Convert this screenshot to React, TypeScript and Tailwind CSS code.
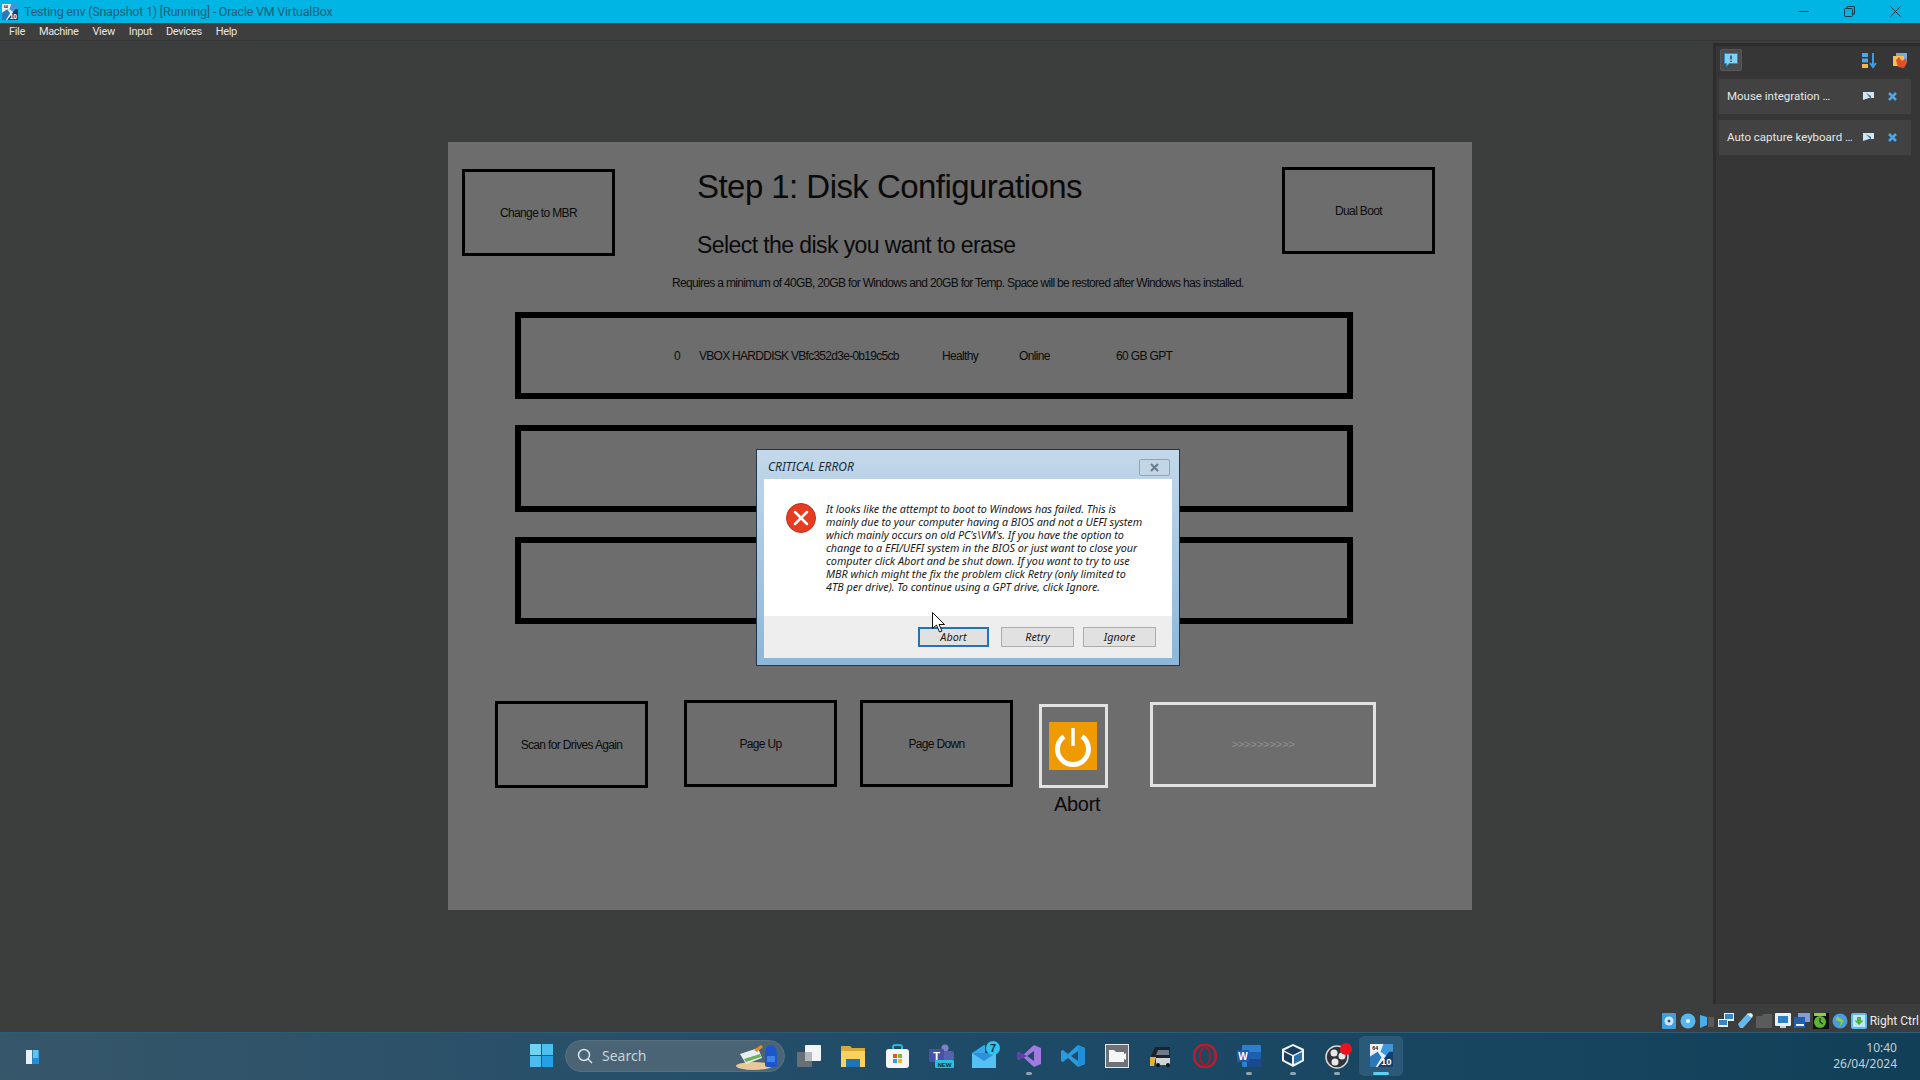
import type React from "react"

const sans = "font-['Noto_Sans',sans-serif]"
const ui = "font-['Roboto',sans-serif]"

const VmTile = ({ size }: { size: number }) => (
  <svg width={size} height={size} viewBox="0 0 24 24">
    <rect width="24" height="24" fill="#e6eef5" />
    <path d="M14 0H24V9L18 13L11 8Z" fill="#3f96d8" />
    <path d="M0 24V13L8 8L12 14L6 24Z" fill="#2a78b8" />
    <path d="M8 24L20 8L24 8V24Z" fill="#123f6e" />
    <rect x="1" y="1" width="9" height="6" fill="#f6f6f6" />
    <text x="5.500" y="6.200" fontSize="5.500" fontWeight="700" textAnchor="middle" fill="#111" fontFamily="Liberation Sans">64</text>
    <text x="17" y="22" fontSize="10" fontWeight="700" textAnchor="middle" fill="#fff" fontFamily="Liberation Sans">10</text>
  </svg>
)

const BlackBox = ({ label, className }: { label: string; className: string }) => (
  <div className={`flex w-[153px] h-[87px] shrink-0 items-center justify-center border-[3px] border-black text-[12px] tracking-[-0.65px] text-[#0c0c0c] ${className}`}>
    {label}
  </div>
)

const DiskRow = ({ children }: { children?: React.ReactNode }) => (
  <div className="relative flex h-[87px] w-[838px] items-center border-[6px] border-black text-[12px] tracking-[-0.65px] text-[#0c0c0c]">
    {children}
  </div>
)

const StatusIcon = ({ children }: { children: React.ReactNode }) => (
  <svg width="16" height="16" viewBox="0 0 16 16" className="shrink-0">{children}</svg>
)

const Cell = ({ children, dot, active }: { children: React.ReactNode; dot?: boolean; active?: boolean }) => (
  <div className={`relative flex h-[40px] w-[44px] shrink-0 items-center justify-center rounded-[5px] ${active ? "bg-[#2b5a78]" : ""}`}>
    {children}
    {dot && <div className="absolute bottom-[1px] h-[3px] w-[6px] rounded-full bg-[#8ea6b4]" />}
    {active && <div className="absolute bottom-[1px] h-[3px] w-[16px] rounded-full bg-[#5fd0ee]" />}
  </div>
)

const lines = [
  "It looks like the attempt to boot to Windows has failed. This is",
  "mainly due to your computer having a BIOS and not a UEFI system",
  "which mainly occurs on old PC's\\VM's. If you have the option to",
  "change to a EFI/UEFI system in the BIOS or just want to close your",
  "computer click Abort and be shut down. If you want to try to use",
  "MBR which might the fix the problem click Retry (only limited to",
  "4TB per drive). To continue using a GPT drive, click Ignore.",
]

export default function App() {
  return (
    <div className={`flex h-[1080px] w-[1920px] flex-col overflow-hidden bg-[#3c3e3d] ${sans}`}>
      {/* Title bar */}
      <div className="flex h-[23px] shrink-0 items-center bg-[#00b4e3] pl-[2px]">
        <VmTile size={16} />
        <span className={`ml-[6px] pt-[1px] text-[12.5px] tracking-[-0.22px] text-[#1f5f78] ${ui}`}>Testing env (Snapshot 1) [Running] - Oracle VM VirtualBox</span>
        <div className="ml-auto flex items-center gap-[35px] pr-[19px] text-[#123c4c]">
          <svg width="11" height="11" viewBox="0 0 11 11"><path d="M0 5.500H11" stroke="currentColor" /></svg>
          <svg width="11" height="11" viewBox="0 0 11 11" fill="none" stroke="currentColor"><rect x="0.500" y="2.500" width="8" height="8" rx="1" /><path d="M3 2.500V.5H10.500V8H8.500" /></svg>
          <svg width="11" height="11" viewBox="0 0 11 11"><path d="M.5.5L10.500 10.500M10.500.5L.5 10.500" stroke="currentColor" /></svg>
        </div>
      </div>

      {/* Menu bar */}
      <div className={`flex h-[18px] shrink-0 items-center gap-[14px] border-b border-[#353635] bg-[#3d3e3d] pl-[9px] pt-[1px] text-[11px] tracking-[-0.35px] text-[#e4e4e4] ${ui}`}>
        <span>File</span>
        <span>Machine</span>
        <span>View</span>
        <span>Input</span>
        <span>Devices</span>
        <span>Help</span>
      </div>

      {/* VM display + notification center */}
      <div className="flex min-h-0 flex-1">
        <div className="flex-1 pl-[448px] pt-[101px]">
          <div className="relative flex h-[768px] w-[1024px] flex-col bg-[#6d6d6d] font-['Liberation_Sans',sans-serif]">
            <div className="flex h-[125px] items-start">
              <BlackBox label="Change to MBR" className="ml-[14px] mt-[27px]" />
              <div className="ml-[82px] w-[585px]">
                <h1 className="mt-[27px] text-[33px] leading-[36px] tracking-[-0.55px] text-[#0a0a0a]">Step 1: Disk Configurations</h1>
                <h2 className="mt-[27px] text-[23px] leading-[26px] tracking-[-0.58px] text-[#0a0a0a]">Select the disk you want to erase</h2>
              </div>
              <BlackBox label="Dual Boot" className="mt-[25px]" />
            </div>

            <p className="ml-[224px] mt-[8px] h-[16px] text-[12px] leading-[16px] tracking-[-0.67px] text-[#0c0c0c]">
              Requires a minimum of 40GB, 20GB for Windows and 20GB for Temp. Space will be restored after Windows has installed.
            </p>

            <div className="ml-[67px] mt-[21px] flex flex-col gap-[25.5px]">
              <DiskRow>
                <span className="ml-[153px] w-[25px]">0</span>
                <span className="w-[243px] tracking-[-0.72px]">VBOX HARDDISK VBfc352d3e-0b19c5cb</span>
                <span className="w-[77px]">Healthy</span>
                <span className="w-[97px]">Online</span>
                <span>60 GB GPT</span>
              </DiskRow>
              <DiskRow />
              <DiskRow />
            </div>

            {/* Bottom buttons */}
            <div className="ml-[47px] mt-[76px] flex items-start">
              <BlackBox label="Scan for Drives Again" className="mt-[1px]" />
              <BlackBox label="Page Up" className="ml-[36px]" />
              <BlackBox label="Page Down" className="ml-[23px]" />
              <div className="relative ml-[26px] mt-[4px] flex h-[84px] w-[69px] shrink-0 items-center border-[3px] border-[#e2e2e2] pl-[7px]">
                <svg width="48" height="48" viewBox="0 0 48 48">
                  <rect width="48" height="48" fill="#ef9b00" />
                  <path d="M15 14.500 A15.500 15.500 0 1 0 33 14.500" fill="none" stroke="#fff" strokeWidth="5" />
                  <path d="M24 6V24" stroke="#fff" strokeWidth="3.500" />
                </svg>
                <span className="absolute left-[12px] top-[85px] text-[20px] leading-[24px] tracking-[-0.3px] text-[#0a0a0a]">Abort</span>
              </div>
              <div className="ml-[42px] mt-[2px] flex h-[85px] w-[226px] shrink-0 items-center justify-center border-[3px] border-[#e2e2e2] text-[11.5px] tracking-[-0.4px] text-[#8f8f8f]">
                {">>>>>>>>>>"}
              </div>
            </div>

            {/* Critical error dialog */}
            <div className={`absolute left-[308px] top-[307px] flex h-[217px] w-[424px] flex-col border border-[#20364a] bg-gradient-to-b from-[#c3d8ea] to-[#8db6d8] px-[7px] pb-[7px] ${sans}`}>
              <div className="flex h-[29px] shrink-0 items-start">
                <span className="ml-[4px] mt-[9px] text-[12px] leading-[16px] italic text-[#1c2a36]">CRITICAL ERROR</span>
                <div className="ml-auto mr-[2px] mt-[9px] flex h-[17px] w-[31px] items-center justify-center rounded-[2px] border border-[#8aa6bd] bg-[#c3d6e6]">
                  <svg width="11" height="9" viewBox="0 0 11 9"><path d="M2 1L9 8M9 1L2 8" stroke="#6a7a88" strokeWidth="2" /></svg>
                </div>
              </div>
              <div className="flex min-h-0 flex-1 flex-col">
                <div className="flex h-[137px] shrink-0 bg-white pl-[22px] pt-[24px]">
                  <svg width="30" height="30" viewBox="0 0 30 30" className="shrink-0">
                    <circle cx="15" cy="15" r="14.500" fill="#e63c20" stroke="#b9341e" />
                    <path d="M9 9L21 21M21 9L9 21" stroke="#fff" strokeWidth="2.500" strokeLinecap="round" />
                  </svg>
                  <div className="ml-[10px] -mt-[1px] whitespace-nowrap text-[10.8px] leading-[13px] tracking-[-0.04px] italic text-[#1a1a1a]">
                    {lines.map((l) => <div key={l}>{l}</div>)}
                  </div>
                </div>
                <div className="flex flex-1 items-start justify-end bg-[#eeeeee] pr-[16px] pt-[11px] text-[10.8px] italic text-[#222]">
                  <div className="flex h-[20px] w-[71px] items-center justify-center border-2 border-[#1f75b8] bg-[#e1e1e1]">Abort</div>
                  <div className="ml-[12px] flex h-[20px] w-[73px] items-center justify-center border border-[#adadad] bg-[#e1e1e1]">Retry</div>
                  <div className="ml-[9px] flex h-[20px] w-[73px] items-center justify-center border border-[#adadad] bg-[#e1e1e1]">Ignore</div>
                </div>
              </div>
            </div>

            {/* Mouse pointer */}
            <svg width="13" height="21" viewBox="0 0 13 21" className="absolute left-[484px] top-[470px]">
              <path d="M.5.5V16.500L4.500 13L7.500 20L10 19L7 12.500H12.500Z" fill="#fff" stroke="#111" />
            </svg>
          </div>
        </div>

        {/* Notification center */}
        <div className={`mb-[1px] mt-[2px] flex w-[207px] shrink-0 flex-col border-l-[3px] border-t-[3px] border-[#2c2d2c] bg-[#353635] pl-[3px] pr-[9px] text-[11.5px] text-[#e6e6e6] ${ui}`}>
          <div className="flex h-[28px] shrink-0 items-center pl-[1px] pr-[3px]">
            <div className="flex h-[22px] w-[22px] items-center justify-center rounded-[2px] border border-[#55585a] bg-[#4a4b4c]">
              <svg width="16" height="16" viewBox="0 0 16 16">
                <path d="M1.500 1.500H14.500V11.500H6L3.500 14.500V11.500H1.500Z" fill="#7fd1f5" stroke="#2f89c4" />
                <path d="M8 3.500V7.500M8 8.800V10" stroke="#123" strokeWidth="1.200" />
              </svg>
            </div>
            <svg width="17" height="17" viewBox="0 0 17 17" className="ml-auto">
              <rect x="1" y="1" width="6" height="4" fill="#4aa8e8" />
              <rect x="1" y="6.500" width="6" height="4" fill="#4aa8e8" />
              <rect x="1" y="12" width="6" height="4" fill="#f2b84b" />
              <path d="M12 1V14M9 11L12 15L15 11" fill="none" stroke="#3d9be0" strokeWidth="2" />
            </svg>
            <svg width="17" height="17" viewBox="0 0 17 17" className="ml-[13px]">
              <rect x="5" y="1" width="11" height="9" fill="#7fa9d8" />
              <rect x="2" y="4" width="11" height="10" fill="#f2c14e" />
              <path d="M5 8L8 5L11 9L15 6L16 11L13 16L7 15Z" fill="#e2502a" />
            </svg>
          </div>
          <div className="mt-[5px] flex h-[35px] shrink-0 items-center bg-[#414241] pl-[8px] pr-[14px]">
            <span className="flex-1">Mouse integration …</span>
            <svg width="11" height="9" viewBox="0 0 11 9" className="mr-[14px]"><path d="M0 0H11V6H6L0 8Z" fill="#cfe6f5" /><path d="M3 1L8 4V7Z" fill="#3e6f92" /></svg>
            <svg width="9" height="9" viewBox="0 0 9 9"><path d="M1 1L8 8M8 1L1 8" stroke="#4aa8e8" strokeWidth="2.500" /></svg>
          </div>
          <div className="mt-[6px] flex h-[35px] shrink-0 items-center bg-[#414241] pl-[8px] pr-[14px]">
            <span className="flex-1">Auto capture keyboard …</span>
            <svg width="11" height="9" viewBox="0 0 11 9" className="mr-[14px]"><path d="M0 0H11V6H6L0 8Z" fill="#cfe6f5" /><path d="M3 1L8 4V7Z" fill="#3e6f92" /></svg>
            <svg width="9" height="9" viewBox="0 0 9 9"><path d="M1 1L8 8M8 1L1 8" stroke="#4aa8e8" strokeWidth="2.500" /></svg>
          </div>
        </div>
      </div>

      {/* VirtualBox status bar */}
      <div className={`flex h-[27px] shrink-0 items-center justify-end gap-[3px] bg-[#3c3e3d] pt-[5px] text-[12px] text-[#eaeaea] ${ui}`}>
        <StatusIcon><rect x="1" y="0" width="14" height="16" rx="1" fill="#3f9fe0" /><circle cx="8" cy="8" r="4.500" fill="#cfe8f8" /><circle cx="8" cy="8" r="1.500" fill="#26608c" /></StatusIcon>
        <StatusIcon><circle cx="8" cy="8" r="7.500" fill="#55b7ee" /><circle cx="8" cy="8" r="2" fill="#e6f5ff" /></StatusIcon>
        <StatusIcon><path d="M1 2L8 4V12L1 15Z" fill="#4aaeea" /><rect x="9" y="4" width="6" height="10" fill="#5a5b5a" /></StatusIcon>
        <StatusIcon><rect x="6" y="0" width="10" height="8" fill="#eaf2f8" /><rect x="7" y="1" width="8" height="5" fill="#3583c8" /><rect x="0" y="6" width="10" height="8" fill="#eaf2f8" /><rect x="1" y="7" width="8" height="5" fill="#3583c8" /></StatusIcon>
        <StatusIcon><path d="M1 11L9 2L11 0L15 3L14 6L6 15H3Z" fill="#62b8ef" /><path d="M10 1L15 5L16 2L14 0Z" fill="#e6f2fa" /></StatusIcon>
        <StatusIcon><path d="M0 3H6L7 1H16V15H0Z" fill="#5a5b5a" /></StatusIcon>
        <StatusIcon><rect x="0" y="0" width="16" height="13" rx="1" fill="#e8f0f6" /><rect x="3" y="3" width="10" height="7" fill="#2f7fc7" /><rect x="5" y="13" width="6" height="2" fill="#c8d4dc" /></StatusIcon>
        <StatusIcon><rect x="4" y="0" width="12" height="9" fill="#7f9fd6" /><rect x="0" y="4" width="11" height="11" fill="#1f5fae" /><rect x="2" y="11" width="8" height="2" fill="#e8f0f6" /></StatusIcon>
        <StatusIcon><rect x="0" y="0" width="16" height="16" fill="#111" /><circle cx="7" cy="9" r="6" fill="#5fb32e" /><path d="M7 5V9L10 11" fill="none" stroke="#123" strokeWidth="1.200" /><rect x="1" y="0" width="12" height="3" fill="#8fce3f" /></StatusIcon>
        <StatusIcon><circle cx="8" cy="8" r="7.500" fill="#4a9be0" /><path d="M5 3L12 8L7 14L9 9L4 7Z" fill="#8cd13f" /></StatusIcon>
        <StatusIcon><rect x="0" y="0" width="16" height="16" rx="2" fill="#5cbcf0" /><rect x="2" y="2" width="12" height="12" fill="#bfe6fb" /><path d="M8 12L3.500 7.500H6V4H10V7.500H12.500Z" fill="#4bb543" /></StatusIcon>
        <span className="whitespace-nowrap pr-[1px]">Right Ctrl</span>
      </div>

      {/* Windows taskbar */}
      <div className="relative flex h-[48px] shrink-0 items-center border-t border-[#2f5c74] bg-gradient-to-r from-[#36566a] via-[#1e4b68] to-[#123f58] pb-[2px] pl-[519px]">
        <svg width="16" height="16" viewBox="0 0 24 24" className="absolute left-[24px] top-[15px]">
          <rect x="3" y="3" width="9" height="21" fill="#e8eef2" />
          <rect x="13" y="3" width="9" height="21" fill="#58c6fa" />
          <rect x="13" y="15" width="9" height="9" fill="#1c8fe4" />
        </svg>

        <Cell>
          <svg width="23" height="23" viewBox="0 0 23 23">
            <rect width="11" height="11" fill="#6fd3f2" />
            <rect x="12" width="11" height="11" fill="#4cc0ee" />
            <rect y="12" width="11" height="11" fill="#4cbcec" />
            <rect x="12" y="12" width="11" height="11" fill="#24a0e4" />
          </svg>
        </Cell>

        <div className="ml-[2px] flex h-[32px] w-[220px] shrink-0 items-center rounded-full border border-[#587080] bg-[#4a6476] pl-[11px] pr-[4px]">
          <svg width="16" height="16" viewBox="0 0 16 16" fill="none" stroke="#d8e2e8" strokeWidth="1.500">
            <circle cx="7" cy="7" r="5.500" /><path d="M11 11L15 15" />
          </svg>
          <span className="ml-[9px] text-[14px] text-[#c6d3da]">Search</span>
          <svg width="46" height="28" viewBox="0 0 46 28" className="ml-auto">
            <ellipse cx="20" cy="24" rx="18" ry="4" fill="#e8c896" />
            <path d="M6 12L24 6L28 16L12 22Z" fill="#e8eef0" />
            <path d="M20 8L27 3L29 5L23 10Z" fill="#e0902e" />
            <path d="M10 17L26 12L27 15L12 20Z" fill="#6fae5a" />
            <path d="M31 12C31 6 34 3 37 3C40 3 43 6 43 12V23C43 25 41 25 37 25C33 25 31 25 31 23Z" fill="#1d56c8" />
            <rect x="33" y="14" width="8" height="6" fill="#3f82e6" />
          </svg>
        </div>

        <div className="ml-[2px] flex items-center">
          <Cell>
            <svg width="24" height="22" viewBox="0 0 24 22">
              <rect x="8" y="0" width="16" height="16" rx="1" fill="#f2f4f5" />
              <rect x="0" y="7" width="15" height="15" rx="1" fill="#6e7478" opacity=".9" />
              <rect x="8" y="7" width="7" height="9" fill="#b4b8ba" />
            </svg>
          </Cell>
          <Cell>
            <svg width="24" height="22" viewBox="0 0 24 22">
              <path d="M0 1H9L11 3H24V22H0Z" fill="#d9a93a" />
              <path d="M0 6H24V22H0Z" fill="#f8d25c" />
              <rect x="5" y="14" width="14" height="8" fill="#1f73b8" />
            </svg>
          </Cell>
          <Cell>
            <svg width="23" height="24" viewBox="0 0 23 24">
              <path d="M7 6V3C7 1 8 1 11.500 1C15 1 16 1 16 3V6" fill="none" stroke="#35b2dc" strokeWidth="2" />
              <rect x="0" y="5" width="23" height="19" rx="3" fill="#f4f6f7" />
              <rect x="7" y="10" width="4" height="4" fill="#e8502a" />
              <rect x="12" y="10" width="4" height="4" fill="#7fba2c" />
              <rect x="7" y="15" width="4" height="4" fill="#27a4e8" />
              <rect x="12" y="15" width="4" height="4" fill="#f8b81c" />
            </svg>
          </Cell>
          <Cell>
            <svg width="25" height="24" viewBox="0 0 25 24">
              <circle cx="16" cy="4" r="3.500" fill="#7b83c9" />
              <rect x="11" y="7" width="14" height="10" rx="3" fill="#5a60b0" />
              <rect x="0" y="5" width="15" height="13" rx="1" fill="#4a50a8" />
              <text x="7.500" y="15.500" fontSize="11" fontWeight="700" textAnchor="middle" fill="#fff" fontFamily="Liberation Sans">T</text>
              <rect x="6" y="16" width="19" height="8" rx="1" fill="#2bbfe0" />
              <text x="15.500" y="22.500" fontSize="6" fontWeight="700" textAnchor="middle" fill="#123" fontFamily="Liberation Sans">NEW</text>
            </svg>
          </Cell>
          <Cell>
            <svg width="30" height="29" viewBox="0 0 30 29" className="ml-[2px] shrink-0">
              <path d="M1 12L13 4H14V27H1Z" fill="#35a8e8" />
              <path d="M1 12H25V27H1Z" fill="#2f8fd8" />
              <path d="M1 12L13 20L25 12V27H1Z" fill="#54c0f4" />
              <circle cx="22" cy="7" r="7" fill="#30c4f0" />
              <text x="22" y="11" fontSize="11" fontWeight="700" textAnchor="middle" fill="#0e3348" fontFamily="Liberation Sans">7</text>
            </svg>
          </Cell>
          <Cell dot>
            <svg width="24" height="24" viewBox="0 0 24 24">
              <path d="M17 1L24 4V20L17 23L6 13L2 16L0 15V9L2 8L6 11Z" fill="#a07ae0" />
              <path d="M17 7V17L10 12Z" fill="#1e4b68" />
              <path d="M0 9L2 8L10 12L2 16L0 15Z" fill="#5f3fa8" />
            </svg>
          </Cell>
          <Cell>
            <svg width="24" height="24" viewBox="0 0 24 24">
              <path d="M17 1L24 4V20L17 23L7 14L2 18L0 17V7L2 6L7 10Z" fill="#2a9be0" />
              <path d="M17 7V17L10 12Z" fill="#1e4b68" />
              <path d="M17 1L24 4V20L17 23Z" fill="#1f8fd8" />
            </svg>
          </Cell>
          <Cell>
            <svg width="24" height="24" viewBox="0 0 24 24">
              <rect x=".5" y=".5" width="23" height="23" fill="#6c7276" stroke="#e8e8e8" />
              <path d="M4 6H9L11 8H19V18H4Z" fill="#f6f6f6" />
              <path d="M18 11L21 9V16L18 14Z" fill="#f6f6f6" />
            </svg>
          </Cell>
          <Cell>
            <svg width="24" height="24" viewBox="0 0 24 24">
              <path d="M6 3H21V20H2V12Z" fill="#20222a" />
              <path d="M9 6H20V11H7Z" fill="#6f7a8a" />
              <path d="M1 13H7L5 22H1Z" fill="#e2b23a" />
              <rect x="7" y="14" width="14" height="7" fill="#cfd2d6" />
              <circle cx="9" cy="21" r="2" fill="#111" /><circle cx="19" cy="21" r="2" fill="#111" />
            </svg>
          </Cell>
          <Cell>
            <svg width="24" height="24" viewBox="0 0 24 24" fill="none">
              <ellipse cx="12" cy="12" rx="11" ry="11.500" stroke="#b81e2e" strokeWidth="2.500" />
              <ellipse cx="12" cy="12" rx="5" ry="9" stroke="#a31c2c" strokeWidth="2" />
            </svg>
          </Cell>
          <Cell dot>
            <svg width="24" height="22" viewBox="0 0 24 22">
              <rect x="5" y="0" width="19" height="22" rx="1" fill="#2f7fd0" />
              <rect x="10" y="7" width="14" height="7" fill="#1f5fae" />
              <rect x="10" y="14" width="14" height="8" fill="#184a8c" />
              <rect x="0" y="5" width="12" height="12" rx="1" fill="#1a5ab0" />
              <text x="6" y="14.500" fontSize="10" fontWeight="700" textAnchor="middle" fill="#fff" fontFamily="Liberation Sans">W</text>
            </svg>
          </Cell>
          <Cell dot>
            <svg width="24" height="25" viewBox="0 0 24 25">
              <path d="M12 1L23 6V18L12 24L1 18V6Z" fill="#f2f4f6" />
              <path d="M12 3L21 7.500L12 12L3 7.500Z" fill="#173e5e" />
              <path d="M3 9L11 13V21L3 17Z" fill="#173e5e" />
              <path d="M21 9L13 13V21L21 17Z" fill="#2b6ea8" />
            </svg>
          </Cell>
          <Cell dot>
            <svg width="28" height="26" viewBox="0 0 28 26" className="ml-[3px] shrink-0">
              <circle cx="12" cy="14" r="11" fill="#30343a" stroke="#d8d8d8" strokeWidth="1.500" />
              <circle cx="9" cy="10" r="3.500" fill="#e8e8e8" />
              <circle cx="17" cy="13" r="3.500" fill="#e8e8e8" />
              <circle cx="10" cy="19" r="3.500" fill="#e8e8e8" />
              <circle cx="21" cy="6" r="6" fill="#f01020" />
            </svg>
          </Cell>
          <Cell active>
            <VmTile size={23} />
          </Cell>
        </div>

        <div className="ml-auto flex flex-col items-end pr-[23px] text-[12px] leading-[16px] text-[#c3d0d8]">
          <span>10:40</span>
          <span>26/04/2024</span>
        </div>
      </div>
    </div>
  )
}
